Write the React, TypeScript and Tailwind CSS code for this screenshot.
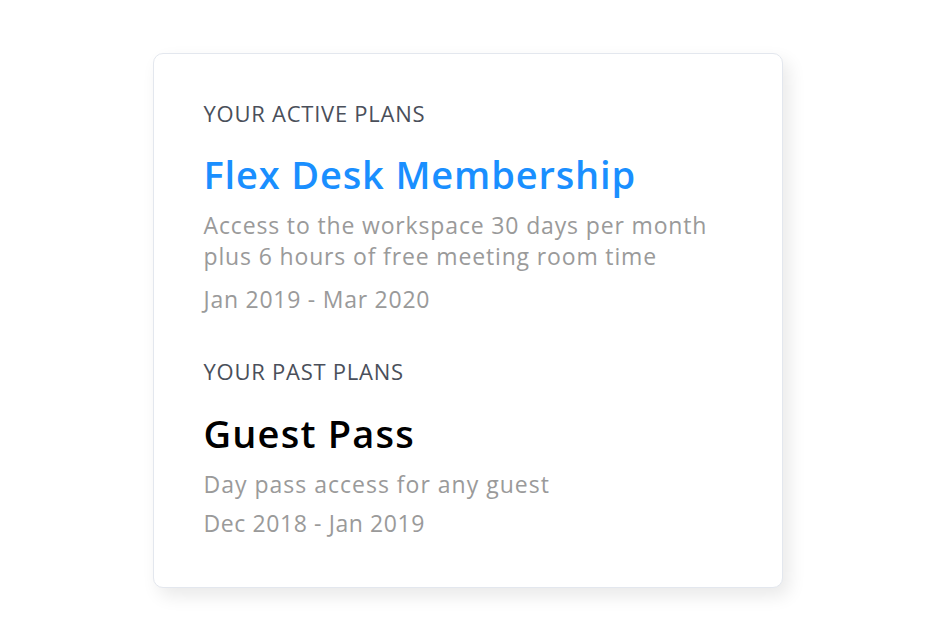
import React from "react";

export default function App() {
  const font = { fontFamily: '"Open Sans", "Noto Sans", sans-serif' };
  return (
    <div className="w-[935px] h-[641px] bg-white flex items-center justify-center" style={font}>
      <div className="w-[630px] h-[535px] bg-white border border-[#e3e7ee] rounded-[10px] shadow-[6px_8px_18px_rgba(0,0,0,0.09)] pl-[50px] pr-[51px] pt-[45px]">
        <div className="text-[22px] leading-[28px] text-[#4a4f5a] tracking-[0.75px]">YOUR ACTIVE PLANS</div>
        <div className="mt-[23px] text-[38px] leading-[48px] font-semibold text-[#1a8fff] tracking-[0.85px]">Flex Desk Membership</div>
        <div className="mt-[11.5px] text-[23px] leading-[31px] text-[#9a9a9a] tracking-[0.85px]">
          Access to the workspace 30 days per month<br />plus 6 hours of free meeting room time
        </div>
        <div className="mt-[12px] text-[23px] leading-[31px] text-[#9a9a9a] tracking-[0.75px]">Jan 2019 - Mar 2020</div>
        <div className="mt-[42.5px] text-[22px] leading-[28px] text-[#4a4f5a] tracking-[0.75px]">YOUR PAST PLANS</div>
        <div className="mt-[24px] text-[38px] leading-[48px] font-semibold text-black tracking-[1.2px]">Guest Pass</div>
        <div className="mt-[11.5px] text-[23px] leading-[31px] text-[#9a9a9a] tracking-[1px]">Day pass access for any guest</div>
        <div className="mt-[8px] text-[23px] leading-[31px] text-[#9a9a9a] tracking-[0.6px]">Dec 2018 - Jan 2019</div>
      </div>
    </div>
  );
}
